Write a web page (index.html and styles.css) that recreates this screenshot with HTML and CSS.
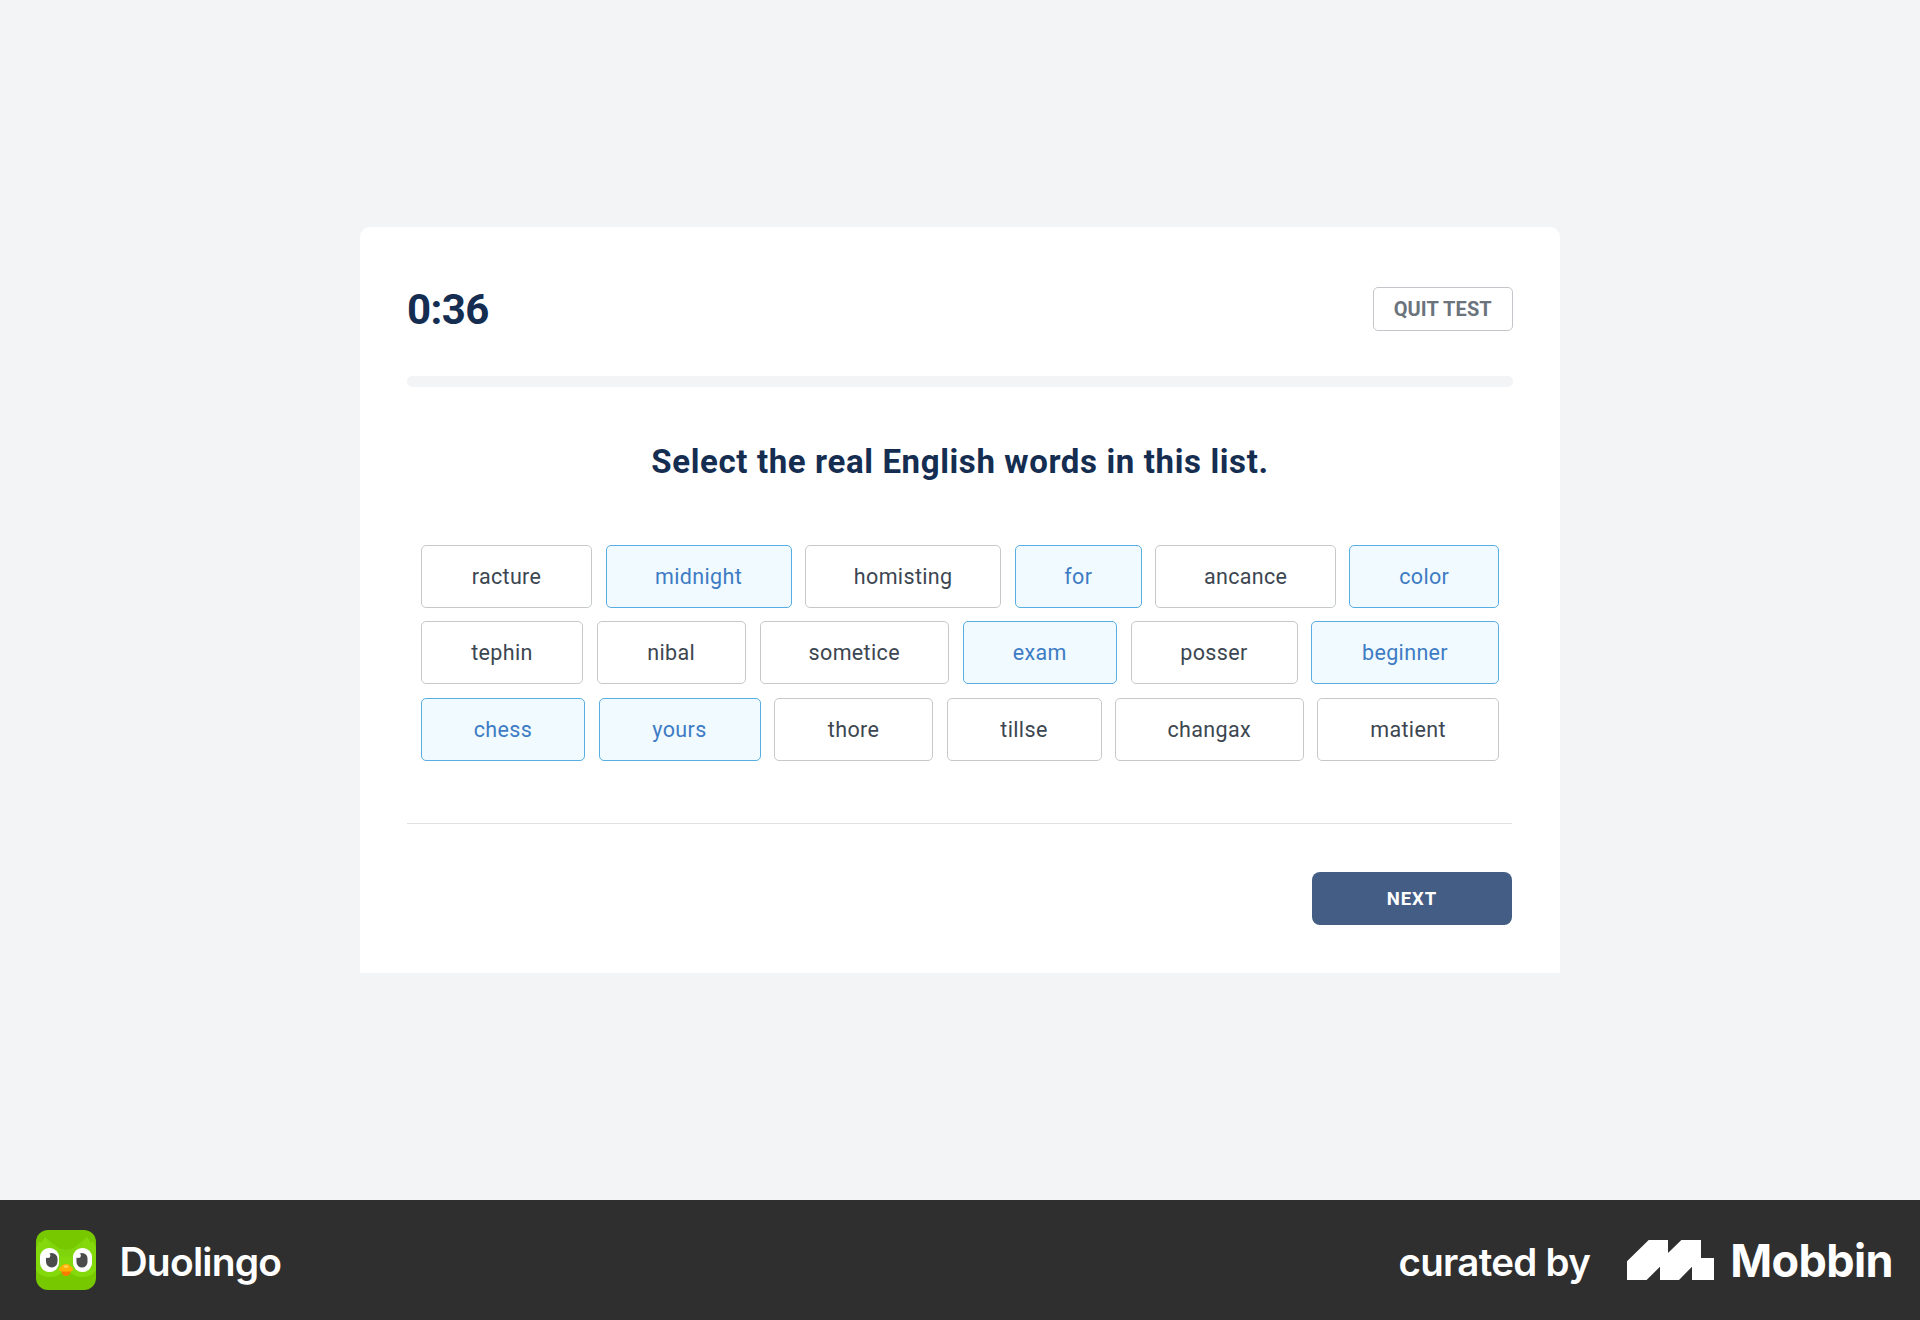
FILE: index.html
```html
<!DOCTYPE html>
<html lang="en">
<head>
<meta charset="utf-8">
<title>Duolingo English Test</title>
<link rel="stylesheet" href="styles.css">
</head>
<body>
<main class="stage">
  <section class="card">
    <header class="card-header">
      <div class="timer">0:36</div>
      <button class="quit">QUIT TEST</button>
    </header>
    <div class="progress"></div>
    <h1 class="prompt">Select the real English words in this list.</h1>
    <div class="words">
      <div class="row row-one">
        <button class="word">racture</button>
        <button class="word selected">midnight</button>
        <button class="word">homisting</button>
        <button class="word selected">for</button>
        <button class="word">ancance</button>
        <button class="word selected">color</button>
      </div>
      <div class="row row-two">
        <button class="word">tephin</button>
        <button class="word">nibal</button>
        <button class="word">sometice</button>
        <button class="word selected">exam</button>
        <button class="word">posser</button>
        <button class="word selected">beginner</button>
      </div>
      <div class="row row-three">
        <button class="word selected">chess</button>
        <button class="word selected">yours</button>
        <button class="word">thore</button>
        <button class="word">tillse</button>
        <button class="word">changax</button>
        <button class="word">matient</button>
      </div>
    </div>
    <footer class="card-footer">
      <button class="next">NEXT</button>
    </footer>
  </section>
</main>
<footer class="credit">
  <div class="app">
    <svg class="owl" viewBox="0 0 60 60">
      <rect width="60" height="60" rx="12" fill="#78c800"/>
      <path d="M0 18 3 11 5 13 9 7 22 18Q30 22 38 18L51 7 55 13 57 11 60 18V40Q56 47 46 47 38 47 34 42H26Q22 47 14 47 4 47 0 40Z" fill="#84d90d"/>
      <path d="M9 7 22 18Q30 22 38 18L51 7 44 18 37 25Q30 29 23 25L16 18Z" fill="#80d40c"/>
      <rect x="4" y="18" width="19" height="24" rx="9" fill="#fff"/>
      <rect x="37" y="18" width="19" height="24" rx="9" fill="#fff"/>
      <rect x="10" y="23" width="11.500" height="14.500" rx="5.700" fill="#4b4b4b"/>
      <rect x="40.500" y="23" width="11" height="14.500" rx="5.500" fill="#4b4b4b"/>
      <circle cx="11.800" cy="25.500" r="2.500" fill="#fff"/>
      <circle cx="42.300" cy="25.500" r="2.500" fill="#fff"/>
      <path d="M25 40H35L34 44Q30 48 26 44Z" fill="#ff7a00"/>
      <path d="M23 39Q26 34 30 34T37 39Q37 41.500 34 41.500H26Q23 41.500 23 39Z" fill="#ffb100"/>
      <ellipse cx="30" cy="36.500" rx="2.500" ry="1.500" fill="#ffd04a"/>
    </svg>
    <span class="app-name">Duolingo</span>
  </div>
  <div class="curator">
    <span class="curated">curated by</span>
    <svg class="mark" viewBox="0 0 87 40"><path d="M0 21.300 21.700 0H41V13L54.400 0H74V18H87V40H65V26.700L52 40H33V26.700L19.600 40H0Z" fill="#fff"/></svg>
    <span class="mobbin">Mobbin</span>
  </div>
</footer>
</body>
</html>
```
FILE: styles.css
```css
* { box-sizing: border-box; }
body {
  margin: 0;
  height: 1320px;
  display: flex;
  flex-direction: column;
  background: #f2f4f6;
  font-family: Roboto, "Liberation Sans", sans-serif;
}
button { font-family: inherit; padding: 0; }
.stage {
  height: 1200px;
  display: flex;
  justify-content: center;
  align-items: center;
}
.card {
  width: 1200px;
  height: 746.500px;
  padding: 60.500px 47px 0;
  background: #fff;
  border-radius: 10px 10px 0 0;
}
.card-header {
  display: flex;
  justify-content: space-between;
  align-items: center;
  height: 44px;
}
.timer {
  padding-top: 1px;
  color: #142d51;
  font-size: 42px;
  font-weight: 700;
  letter-spacing: -0.6px;
}
.quit {
  width: 140.500px;
  height: 44px;
  border: 1px solid #c3c7cb;
  border-radius: 5px;
  background: #fff;
  color: #6b737c;
  font-size: 20px;
  font-weight: 700;
  letter-spacing: 0.1px;
}
.progress {
  height: 10.500px;
  margin-top: 45px;
  border-radius: 5px;
  background: #f2f4f5;
}
.prompt {
  margin: 55px 0 0;
  color: #142d51;
  text-align: center;
  font-size: 33px;
  font-weight: 700;
  line-height: 40px;
  letter-spacing: 0.620px;
}
.words {
  display: flex;
  flex-direction: column;
  gap: 13.500px;
  margin: 63px 14px 0;
}
.row {
  display: grid;
  height: 63px;
  justify-content: space-between;
}
.row-one { grid-template-columns: 171px 186px 196px 127px 180.500px 149.500px; }
.row-two { grid-template-columns: 162px 149.500px 189.500px 154.500px 167px 188px; }
.row-three { grid-template-columns: 164px 162px 159px 155px 188.500px 182px; }
.word {
  border: 1px solid #c6c9cc;
  border-radius: 5px;
  background: #fff;
  color: #3c4651;
  font-size: 21.500px;
  letter-spacing: 0.350px;
}
.selected {
  border-color: #58aee2;
  background: #f1fafe;
  color: #3d7cc4;
}
.card-footer {
  display: flex;
  justify-content: flex-end;
  margin: 62.500px 1px 0 0;
  padding-top: 48px;
  border-top: 1px solid #dfe2e4;
}
.next {
  width: 200px;
  height: 53px;
  border: 0;
  border-radius: 8px;
  background: #445d84;
  color: #fff;
  font-size: 18.500px;
  font-weight: 700;
  letter-spacing: 1px;
}
.credit {
  height: 120px;
  padding: 0 27px 0 36px;
  display: flex;
  justify-content: space-between;
  align-items: center;
  background: #2f2f2f;
  color: #fff;
  font-family: Inter, "Liberation Sans", sans-serif;
}
.app, .curator { display: flex; align-items: center; }
.owl { width: 60px; height: 60px; }
.app-name {
  margin: 3px 0 0 23.500px;
  font-size: 39px;
  font-weight: 600;
  letter-spacing: -0.800px;
}
.curated {
  margin-top: 3px;
  font-size: 38.500px;
  font-weight: 600;
  letter-spacing: -0.700px;
}
.mark { width: 87px; height: 40px; margin: 0 16px 0 37px; }
.mobbin {
  font-size: 45px;
  font-weight: 700;
  letter-spacing: -0.600px;
}
```
